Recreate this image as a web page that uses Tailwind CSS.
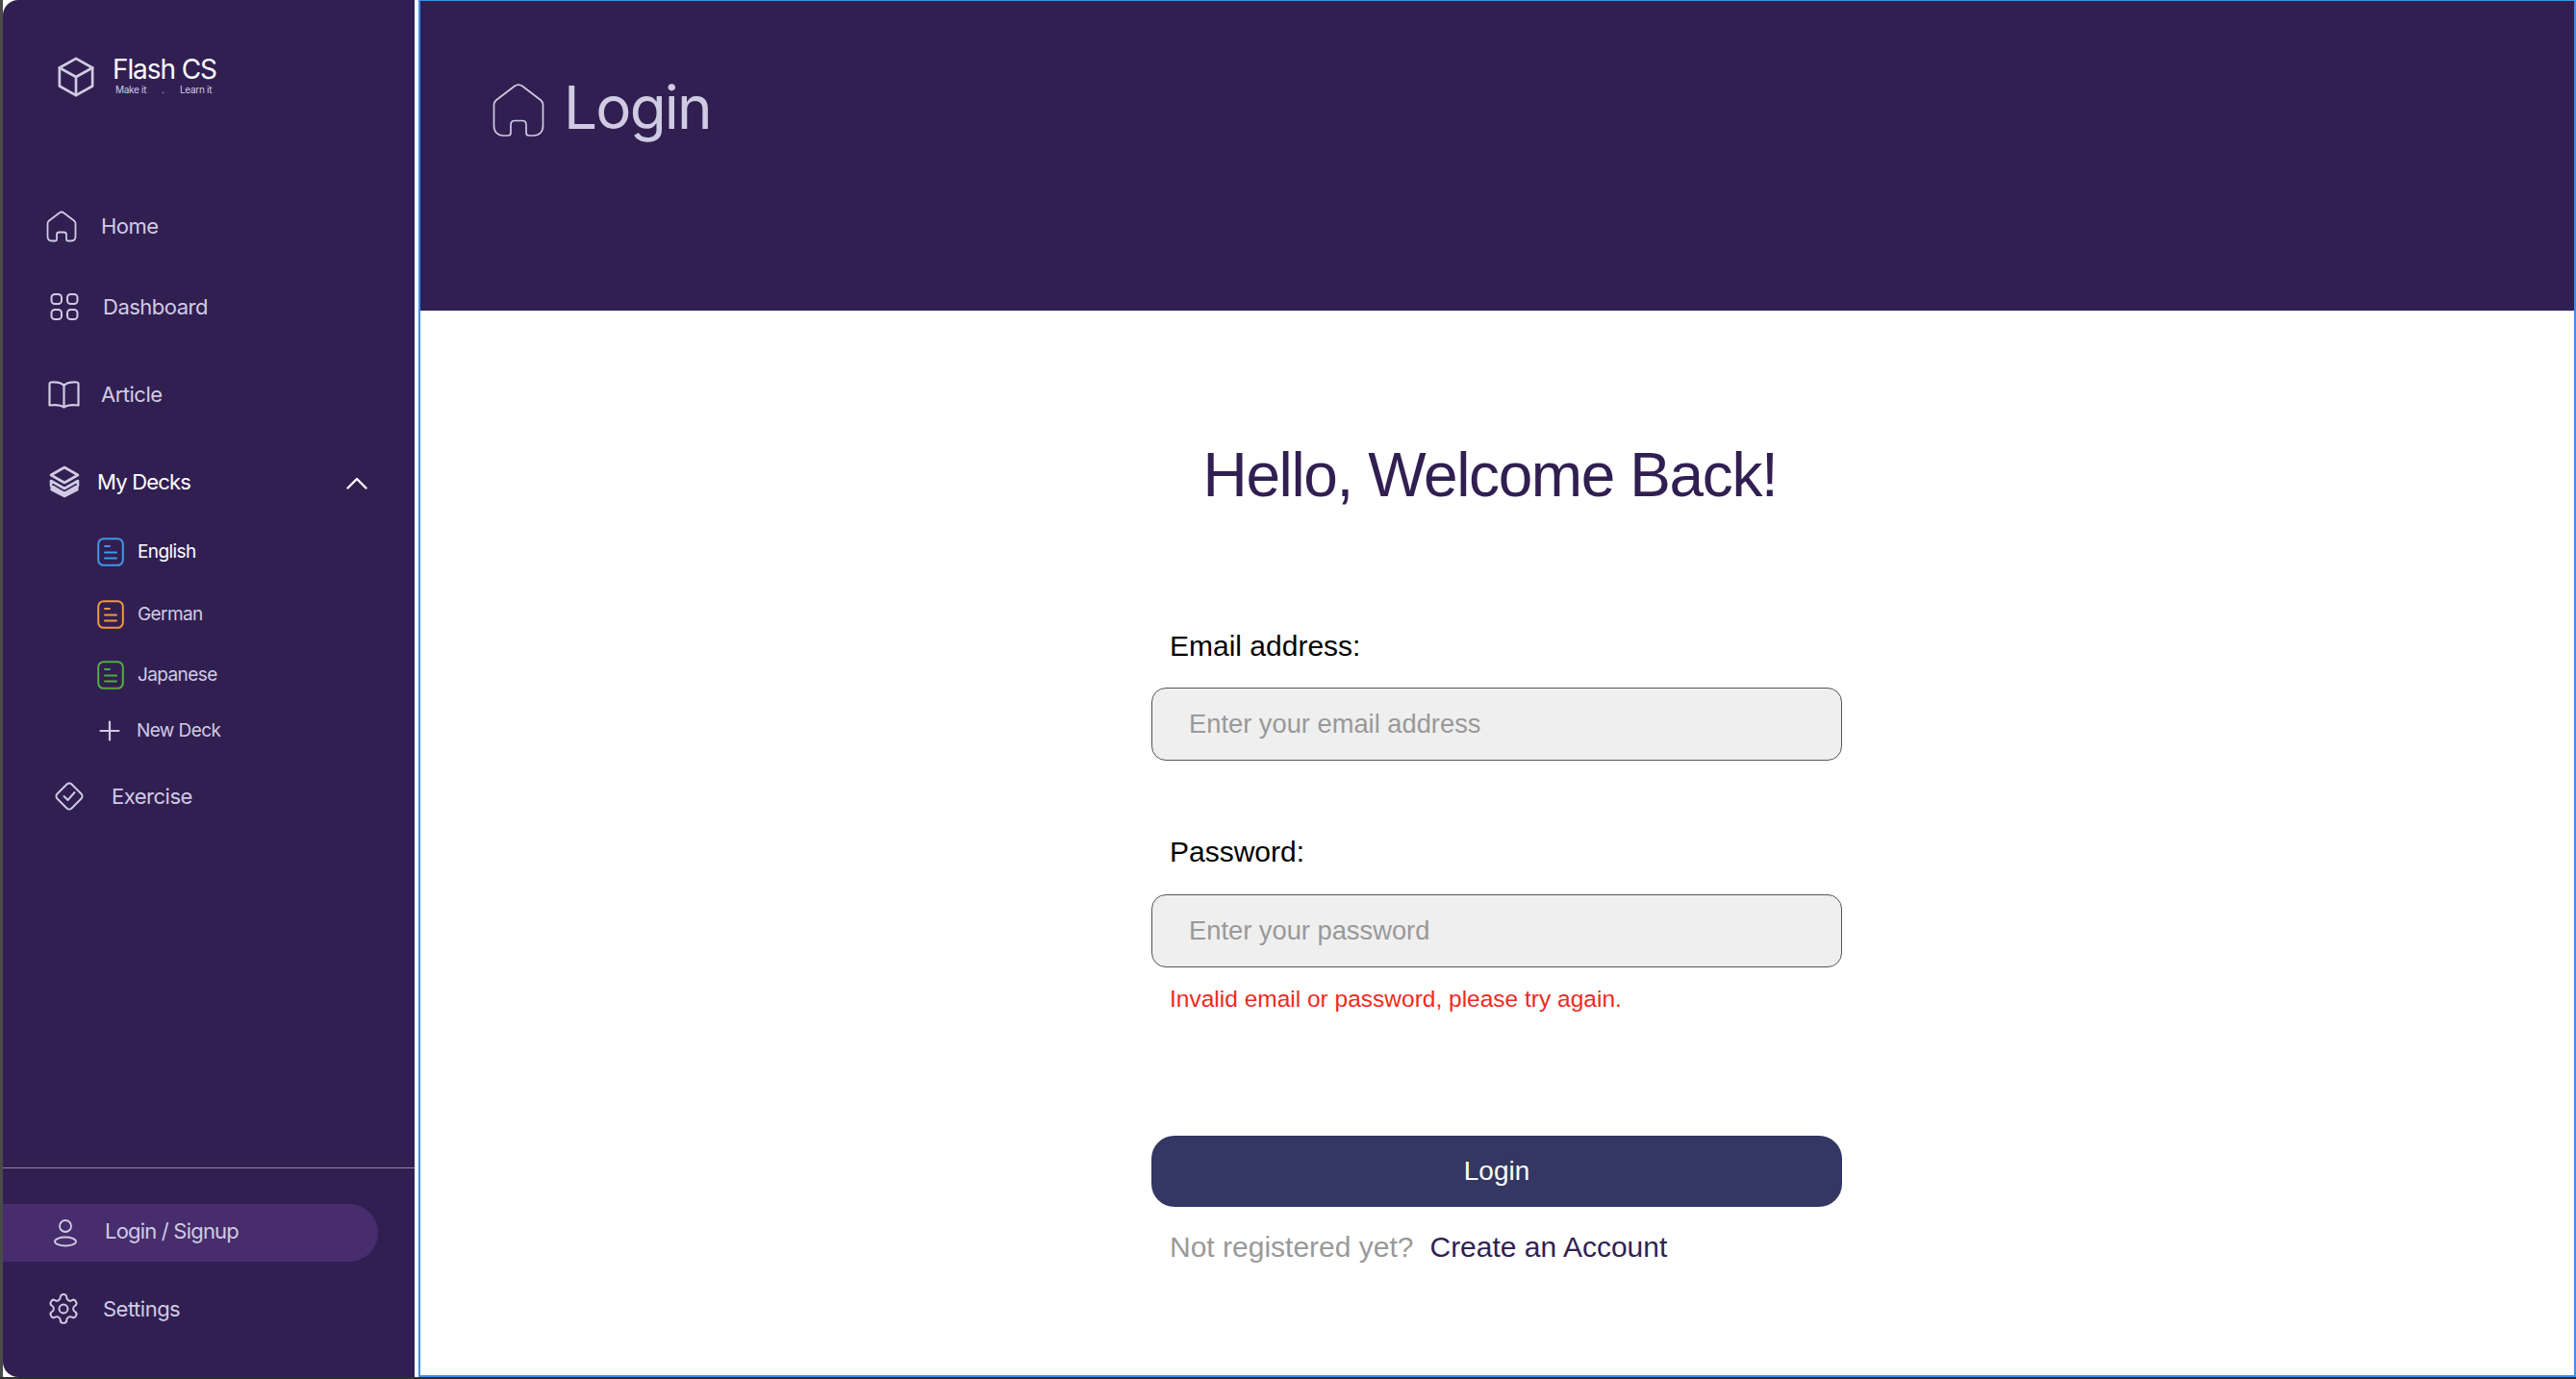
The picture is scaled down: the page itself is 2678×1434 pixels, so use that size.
<!doctype html>
<html lang="en">
<head>
  <meta charset="UTF-8">
  <title>Flash CS - Login</title>
  <script src="https://cdn.jsdelivr.net/npm/@tailwindcss/browser@4"></script>
</head>
<body class="w-[2678px] h-[1434px] overflow-hidden bg-[#2e2e2e]">
  <div class="flex h-[1432px]">

    <!-- Sidebar -->
    <div class="w-[435px] shrink-0 h-full bg-white border-l-[3px] border-[#4a4a4a]">
    <aside class="w-[428px] h-full bg-[#311f52] rounded-tl-[16px] rounded-bl-[16px] flex flex-col font-['Inter',sans-serif] text-[#d0cbe3] text-[22px] tracking-[-0.5px]">
      <div class="flex items-start pl-[56px] pt-[57px] h-[218px]">
        <svg class="w-[40px] h-[44px] mt-[1px] text-[#d0cbe3]" viewBox="0 0 42 44" fill="none" stroke="currentColor" stroke-width="2.8" stroke-linejoin="round" stroke-linecap="round"><path d="M21 2 39 12V32L21 42 3 32V12Z"/><path d="M3 12 21 22 39 12M21 22V42"/></svg>
        <div class="ml-[18px] -mt-[2px]">
          <div class="text-[28px] leading-[34px] text-white tracking-[-1.100px]">Flash CS</div>
          <div class="flex text-[10px] leading-[12px] -mt-[2px] text-[#d0cbe3] tracking-[-0.3px] pl-[3px]">
            <span class="w-[48px]">Make it</span><span class="w-[19px]">.</span><span>Learn it</span>
          </div>
        </div>
      </div>

      <nav class="flex flex-col">
        <a class="flex items-center h-[34px] pl-[45px] gap-[25px]">
          <svg class="w-[32px] h-[33px]" viewBox="0 0 32 33" fill="none" stroke="currentColor" stroke-width="1.8" stroke-linejoin="round"><path d="M13.5 2.5 3 10.5C2 11.3 1.5 12.3 1.5 13.5V27C1.5 29.5 3.200 31.500 6 31.500H9.500C10.500 31.500 11 31 11 30V25C11 23.500 12 22.500 13.500 22.500H18.500C20 22.500 21 23.500 21 25V30C21 31 21.500 31.500 22.500 31.500H26C28.800 31.500 30.500 29.500 30.500 27V13.500C30.500 12.300 30 11.300 29 10.500L18.500 2.500C17 1.300 15 1.300 13.500 2.500Z"/></svg>
          <span>Home</span>
        </a>
        <a class="flex items-center h-[30px] mt-[52px] pl-[49px] gap-[25px]">
          <svg class="w-[30px] h-[30px]" viewBox="0 0 30 30" fill="none" stroke="currentColor" stroke-width="2"><rect x="1.500" y="2" width="10.500" height="10" rx="3.500"/><rect x="18" y="2" width="10.500" height="10" rx="3.500"/><rect x="1.500" y="18" width="10.500" height="10" rx="3.500"/><rect x="18" y="18" width="10.500" height="10" rx="3.500"/></svg>
          <span>Dashboard</span>
        </a>
        <a class="flex items-center h-[30px] mt-[61px] pl-[46px] gap-[21px]">
          <svg class="w-[35px] h-[30px]" viewBox="0 0 35 30" fill="none" stroke="currentColor" stroke-width="2.200" stroke-linejoin="round"><path d="M17.500 6C15 3 11 2 4 2.500C3 2.600 2.500 3 2.500 4V26.500C10 25.500 14 26 17.500 28.500C21 26 25 25.500 32.500 26.500V4C32.500 3 32 2.600 31 2.500C24 2 20 3 17.500 6V28.500"/></svg>
          <span>Article</span>
        </a>
        <a class="flex items-center h-[34px] mt-[59px] pl-[48px] text-white">
          <svg class="w-[32px] h-[34px] text-[#d0cbe3]" viewBox="0 0 32 34" fill="none"><path d="M16 2 30 10 16 18 2 10Z" stroke="currentColor" stroke-width="2.600" stroke-linejoin="round"/><path d="M2 16 16 24 30 16V21L16 29 2 21Z" stroke="currentColor" stroke-width="2.600" stroke-linejoin="round"/><path d="M1.500 21 16 29.500 30.500 21V26L16 33.500 1.500 26Z" fill="currentColor"/></svg>
          <span class="ml-[18px] tracking-[-0.8px]">My Decks</span>
          <svg class="w-[22px] h-[13px] ml-auto mr-[49px] mt-[3px]" viewBox="0 0 22 13" fill="none" stroke="currentColor" stroke-width="2.400" stroke-linecap="round" stroke-linejoin="round"><path d="M1.500 11.500 11 2 20.500 11.500"/></svg>
        </a>

        <div class="flex flex-col text-[19px] tracking-[-0.6px] pl-[98px] mt-[41px]">
          <a class="flex items-center h-[30px] text-white gap-[14px]">
            <svg class="w-[28px] h-[30px] text-[#3f98e8]" viewBox="0 0 28 30" fill="none" stroke="currentColor" stroke-width="2" stroke-linecap="round"><rect x="1.200" y="1.200" width="25.600" height="27.600" rx="5.500"/><path d="M8 9h5M8 15.500h12M8 21.500h12"/></svg>
            <span>English</span>
          </a>
          <a class="flex items-center h-[30px] mt-[35px] gap-[14px]">
            <svg class="w-[28px] h-[30px] text-[#ef9a3a]" viewBox="0 0 28 30" fill="none" stroke="currentColor" stroke-width="2" stroke-linecap="round"><rect x="1.200" y="1.200" width="25.600" height="27.600" rx="5.500"/><path d="M8 9h5M8 15.500h12M8 21.500h12"/></svg>
            <span>German</span>
          </a>
          <a class="flex items-center h-[30px] mt-[33px] gap-[14px]">
            <svg class="w-[28px] h-[30px] text-[#4fb03a]" viewBox="0 0 28 30" fill="none" stroke="currentColor" stroke-width="2" stroke-linecap="round"><rect x="1.200" y="1.200" width="25.600" height="27.600" rx="5.500"/><path d="M8 9h5M8 15.500h12M8 21.500h12"/></svg>
            <span>Japanese</span>
          </a>
          <a class="flex items-center h-[22px] mt-[32px] gap-[17px]">
            <svg class="w-[22px] h-[22px] ml-[2px]" viewBox="0 0 22 22" fill="none" stroke="currentColor" stroke-width="2.200" stroke-linecap="round"><path d="M11 1.500v19M1.500 11h19"/></svg>
            <span>New Deck</span>
          </a>
        </div>

        <a class="flex items-center h-[30px] mt-[42px] pl-[54px] gap-[29px]">
          <svg class="w-[30px] h-[30px]" viewBox="0 0 30 30" fill="none" stroke="currentColor" stroke-width="1.900" stroke-linejoin="round" stroke-linecap="round"><path d="M12.500 2.500 2.500 12.500C1.100 13.900 1.100 16.100 2.500 17.500L12.500 27.500C13.900 28.900 16.100 28.900 17.500 27.500L27.500 17.500C28.900 16.100 28.900 13.900 27.500 12.500L17.500 2.500C16.100 1.100 13.900 1.100 12.500 2.500Z"/><path d="M9.500 15 13.500 19 20.500 11"/></svg>
          <span>Exercise</span>
        </a>
      </nav>

      <div class="mt-auto border-t-[1px] border-[#8f87a6] pt-[37px] pb-[55px]">
        <a class="flex items-center h-[60px] w-[390px] rounded-r-[30px] bg-[#472d6d] pl-[52px] gap-[28px]">
          <svg class="w-[26px] h-[30px]" viewBox="0 0 26 30" fill="none" stroke="currentColor" stroke-width="1.800"><circle cx="13" cy="8" r="6"/><ellipse cx="13" cy="24" rx="11" ry="4.500"/></svg>
          <span class="tracking-[-0.8px] -mt-[3px]">Login / Signup</span>
        </a>
        <a class="flex items-center h-[32px] mt-[33px] pl-[45px] gap-[23px]">
          <svg class="w-[36px] h-[36px]" viewBox="0 0 24 24" fill="none" stroke="currentColor" stroke-width="1.300" stroke-linecap="round" stroke-linejoin="round"><circle cx="12" cy="12" r="3"/><path d="M12.200 2h-.400a2 2 0 0 0-2 2v.200a2 2 0 0 1-1 1.700l-.400.300a2 2 0 0 1-2 0l-.200-.100a2 2 0 0 0-2.700.700l-.200.400a2 2 0 0 0 .700 2.700l.200.100a2 2 0 0 1 1 1.700v.500a2 2 0 0 1-1 1.700l-.200.100a2 2 0 0 0-.700 2.700l.200.400a2 2 0 0 0 2.700.700l.200-.100a2 2 0 0 1 2 0l.400.300a2 2 0 0 1 1 1.700v.200a2 2 0 0 0 2 2h.400a2 2 0 0 0 2-2v-.200a2 2 0 0 1 1-1.700l.400-.300a2 2 0 0 1 2 0l.200.100a2 2 0 0 0 2.700-.700l.200-.400a2 2 0 0 0-.700-2.700l-.200-.100a2 2 0 0 1-1-1.700v-.500a2 2 0 0 1 1-1.700l.200-.100a2 2 0 0 0 .700-2.700l-.200-.400a2 2 0 0 0-2.700-.700l-.200.100a2 2 0 0 1-2 0l-.400-.300a2 2 0 0 1-1-1.700V4a2 2 0 0 0-2-2Z"/></svg>
          <span>Settings</span>
        </a>
      </div>
    </aside>
    </div>

    <!-- Main panel -->
    <main class="w-[2243px] h-full bg-white border-l-[2px] border-t-[1px] border-r-[2px] border-b-[2px] border-[#3d8ef0] flex flex-col">
      <header class="h-[322px] shrink-0 bg-[#311f52] flex items-start pl-[75px] pt-[86px] font-['Inter',sans-serif] text-[#d0cbe3]">
        <svg class="w-[54px] h-[56px]" viewBox="0 0 54 56" fill="none" stroke="currentColor" stroke-width="1.700" stroke-linejoin="round"><path d="M23 2.500 4 17C2.500 18.200 1.500 20 1.500 22V44C1.500 50 5.500 54 11 54H16C18 54 19 53 19 51V43C19 40.500 20.500 38.500 23 38.500H31C33.500 38.500 35 40.500 35 43V51C35 53 36 54 38 54H43C48.500 54 52.500 50 52.500 44V22C52.500 20 51.500 18.200 50 17L31 2.500C28.500 .8 25.500 .8 23 2.500Z"/></svg>
        <h1 class="ml-[20px] -mt-[13px] text-[62px] leading-[75px] tracking-[-1.800px]">Login</h1>
      </header>

      <section class="flex-1 font-['Liberation_Sans',sans-serif] pl-[760px]">
        <div class="w-[718px]">
          <h2 class="text-center pt-[133px] text-[64px] leading-[76px] text-[#311f52] tracking-[-1.400px] -ml-[14px]">Hello, Welcome Back!</h2>
          <form>
            <label class="block mt-[122px] pl-[19px] text-[30px] leading-[36px] text-black">Email address:</label>
            <input type="email" placeholder="Enter your email address" class="mt-[25px] block w-full h-[76px] px-[38px] text-[27.3px] bg-[#efefef] border-[1px] border-[#555555] rounded-[15px] placeholder:text-[#999999]">
            <label class="block mt-[77px] pl-[19px] text-[30px] leading-[36px] text-black">Password:</label>
            <input type="password" placeholder="Enter your password" class="mt-[26px] block w-full h-[76px] px-[38px] text-[27.3px] bg-[#efefef] border-[1px] border-[#555555] rounded-[15px] placeholder:text-[#999999]">
            <p class="mt-[18px] pl-[19px] text-[24.5px] leading-[30px] text-[#ee2a1e]">Invalid email or password, please try again.</p>
            <button type="button" class="block mt-[127px] w-full h-[74px] rounded-[24px] bg-[#343763] text-white text-[28px]">Login</button>
            <p class="mt-[24px] pl-[19px] text-[30px] leading-[36px] text-[#999999]">Not registered yet?<a class="ml-[17px] text-[#311f52]">Create an Account</a></p>
          </form>
        </div>
      </section>
    </main>
  </div>
</body>
</html>
